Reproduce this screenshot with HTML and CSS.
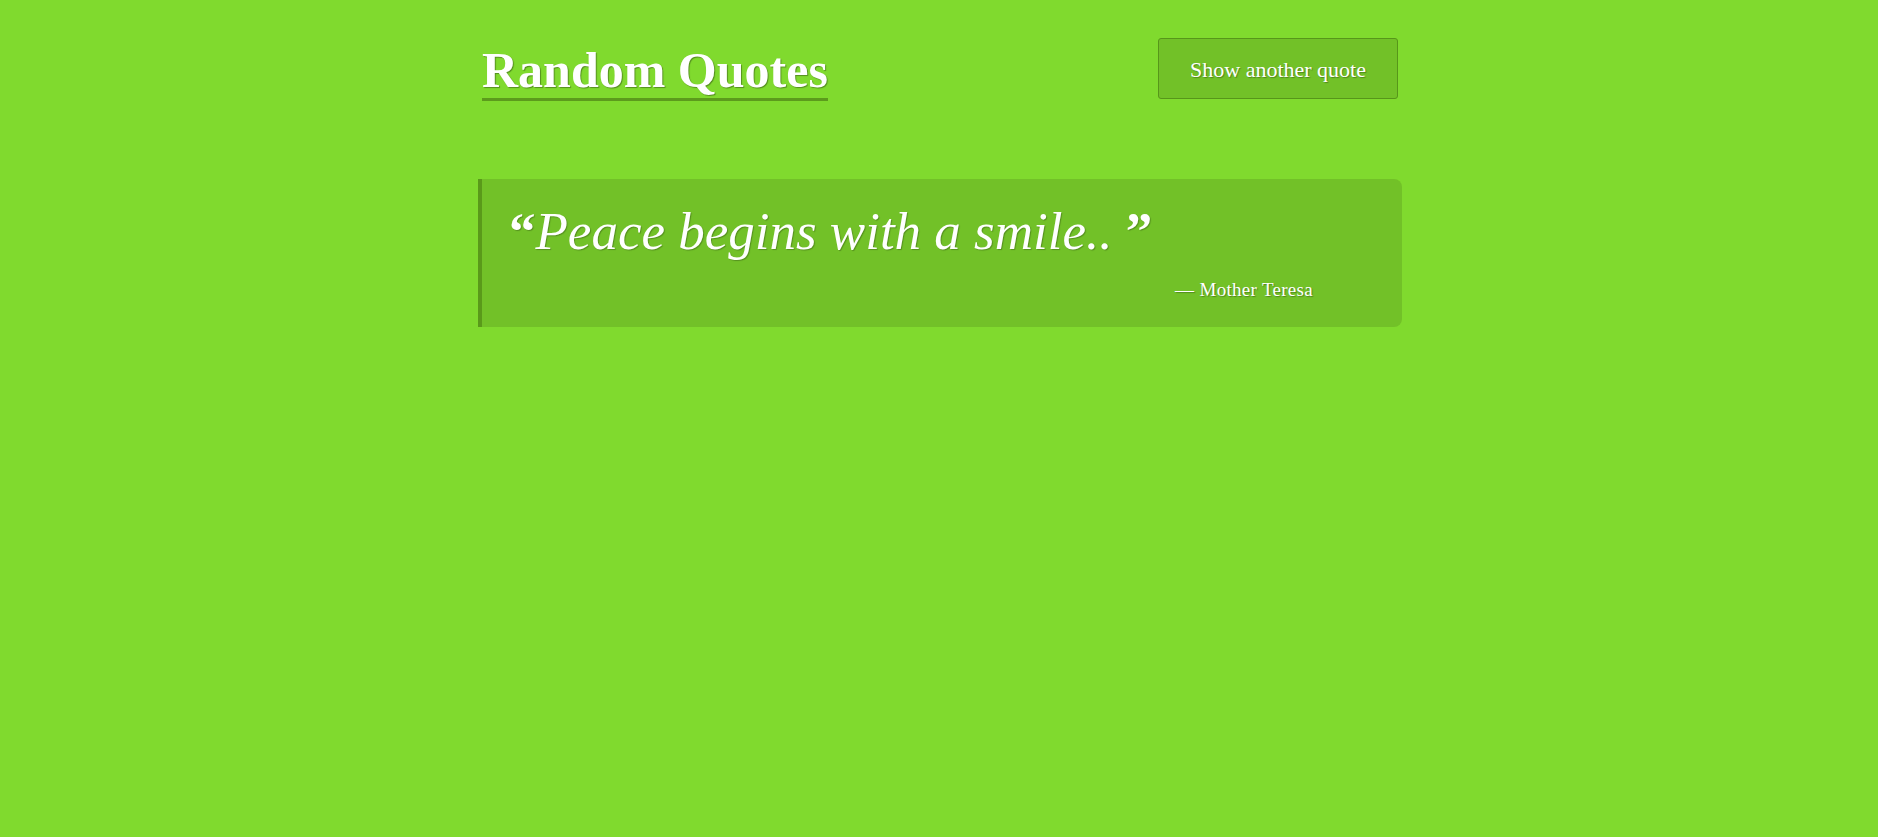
FILE: index.html
```html
<!DOCTYPE html>
<html lang="en">
<head>
<meta charset="utf-8">
<title>Random Quotes</title>
<link rel="stylesheet" href="styles.css">
</head>
<body>
<div class="container">
  <header class="header">
    <h1 class="title">Random Quotes</h1>
    <button class="btn" type="button">Show another quote</button>
  </header>
  <blockquote class="quote">
    <p class="quote-text"><span class="qmark">“</span>Peace begins with a smile.. <span class="qmark">”</span></p>
    <p class="quote-author">— Mother Teresa</p>
  </blockquote>
</div>
</body>
</html>
```
FILE: styles.css
```css
html, body {
  margin: 0;
  padding: 0;
}
body {
  background: #80da2e;
  color: #fff;
  font-family: "Liberation Serif", "DejaVu Serif", serif;
  min-height: 837px;
}
.container {
  width: 926px;
  margin: 0 auto;
  padding-top: 38px;
}
.header {
  display: flex;
  justify-content: space-between;
  align-items: flex-start;
  padding: 0 4px 0 6px;
}
.title {
  margin: 0;
  font-size: 50px;
  font-weight: bold;
  line-height: 54px;
  padding-top: 5px;
  padding-bottom: 1px;
  border-bottom: 3px solid #5c9b1c;
  text-shadow: 1px 1px 1px rgba(0, 0, 0, 0.35);
}
.btn {
  width: 240px;
  height: 61px;
  background: #72c128;
  border: 1px solid #57961a;
  border-radius: 3px;
  color: #fff;
  font-family: "Liberation Serif", "DejaVu Serif", serif;
  font-size: 22px;
  text-shadow: 1px 1px 1px rgba(0, 0, 0, 0.3);
  padding: 2px 0 0;
  cursor: pointer;
}
.quote {
  margin: 78px 0 0 2px;
  background: #72c128;
  border-left: 4px solid #5a9a1a;
  border-radius: 0 8px 8px 0;
  height: 148px;
  box-sizing: border-box;
  padding: 22px 89px 0 27px;
}
.quote-text {
  margin: 0;
  font-style: italic;
  font-size: 53px;
  line-height: 60px;
  text-shadow: 1px 1px 1px rgba(0, 0, 0, 0.25);
}
.qmark {
  font-style: normal;
  font-weight: bold;
}
.quote-author {
  margin: 18px 0 0;
  text-align: right;
  font-size: 19px;
  letter-spacing: 0.3px;
  text-shadow: 1px 1px 1px rgba(0, 0, 0, 0.3);
}
```
